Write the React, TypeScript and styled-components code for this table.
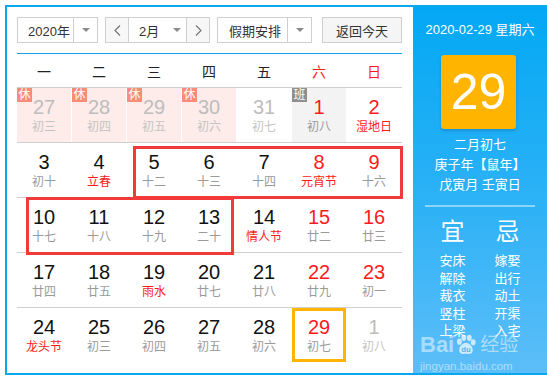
import React from "react";
import styled, { createGlobalStyle, css } from "styled-components";

const GlobalStyle = createGlobalStyle`
  html, body { margin: 0; padding: 0; background: #fff; }
  body { font-family: "Liberation Sans", "Noto Sans CJK SC", sans-serif; }
  * { box-sizing: border-box; }
`;

const BLUE = "#0aa6f0";
const RED = "#ff1a1a";

const Frame = styled.div`
  margin: 5px 0 0 5px;
  width: 542px;
  height: 370px;
  border: 2px solid ${BLUE};
  border-right: none;
  display: flex;
`;

const Main = styled.div`
  width: 406px;
  padding: 10px 11px 0 10px;
  display: flex;
  flex-direction: column;
  background: #fff;
`;

const Toolbar = styled.div`
  display: flex;
  height: 26px;
  align-items: stretch;
`;

const SelectBox = styled.div<{ $ml?: number }>`
  display: flex;
  border: 1px solid #cfcfcf;
  background: #fff;
  margin-left: ${(p) => p.$ml ?? 0}px;
  font-size: 13px;
  color: #333;
`;

const SelectLabel = styled.div<{ $w: number; $pl: number }>`
  width: ${(p) => p.$w}px;
  padding-left: ${(p) => p.$pl}px;
  display: flex;
  align-items: center;
  white-space: nowrap;
`;

const ArrowPart = styled.div<{ $w: number; $divider?: boolean }>`
  width: ${(p) => p.$w}px;
  display: flex;
  align-items: center;
  justify-content: center;
  border-left: ${(p) => (p.$divider ? "1px solid #cfcfcf" : "none")};
`;

const Caret = styled.span`
  width: 0;
  height: 0;
  border-left: 4px solid transparent;
  border-right: 4px solid transparent;
  border-top: 4px solid #8a8a8a;
`;

const NavButton = styled.div<{ $side: "left" | "right" }>`
  width: 23px;
  display: flex;
  align-items: center;
  justify-content: center;
  background: #f7f7f7;
  ${(p) =>
    p.$side === "left"
      ? css`border-right: 1px solid #cfcfcf;`
      : css`border-left: 1px solid #cfcfcf;`}
`;

const MonthMid = styled.div`
  width: 57px;
  display: flex;
  align-items: center;
  padding-left: 10px;
  gap: 14px;
`;

const TodayButton = styled.div`
  margin-left: 10px;
  width: 82px;
  border: 1px solid #cfcfcf;
  background: #f5f5f5;
  display: flex;
  align-items: center;
  justify-content: center;
  font-size: 13px;
  color: #333;
`;

const Rule = styled.div`
  margin-top: 10px;
  height: 1px;
  background: #1ba0e6;
  width: 385px;
`;

const WeekHeader = styled.div`
  display: grid;
  grid-template-columns: repeat(7, 54px);
  column-gap: 1px;
  height: 33px;
  align-items: center;
`;

const WeekLabel = styled.div<{ $weekend?: boolean }>`
  text-align: center;
  font-size: 14px;
  color: ${(p) => (p.$weekend ? RED : "#222")};
`;

const Grid = styled.div`
  position: relative;
`;

const Row = styled.div`
  display: grid;
  grid-template-columns: repeat(7, 54px);
  column-gap: 1px;
  border-top: 1px solid #cfcfcf;
  height: 55px;
`;

type Tone = "other" | "normal" | "weekend";

const Cell = styled.div<{ $bg?: string; $selected?: boolean }>`
  position: relative;
  background: ${(p) => p.$bg ?? "#fff"};
  display: flex;
  flex-direction: column;
  align-items: center;
  padding-top: 8px;
  ${(p) => p.$selected && css`box-shadow: inset 0 0 0 3px #ffb400;`}
`;

const Badge = styled.span<{ $kind: "rest" | "work" }>`
  position: absolute;
  left: 0;
  top: 0;
  width: 15px;
  height: 14px;
  font-size: 12px;
  line-height: 14px;
  text-align: center;
  color: #fff;
  background: ${(p) => (p.$kind === "rest" ? "#f98c79" : "#8e8e8e")};
`;

const DayNum = styled.div<{ $tone: Tone }>`
  font-size: 20px;
  line-height: 22px;
  color: ${(p) => (p.$tone === "other" ? "#bdbdbd" : p.$tone === "weekend" ? RED : "#111")};
`;

const Lunar = styled.div<{ $tone: "other" | "normal" | "festival" }>`
  font-size: 12px;
  line-height: 16px;
  margin-top: 1px;
  color: ${(p) => (p.$tone === "other" ? "#c4c4c4" : p.$tone === "festival" ? RED : "#9a9a9a")};
`;

const Annotation = styled.div<{ $l: number; $t: number; $w: number; $h: number }>`
  position: absolute;
  left: ${(p) => p.$l}px;
  top: ${(p) => p.$t}px;
  width: ${(p) => p.$w}px;
  height: ${(p) => p.$h}px;
  border: 3px solid #f23a3a;
  pointer-events: none;
`;

const Side = styled.div`
  position: relative;
  flex: 1;
  background: linear-gradient(to bottom, #03a8f4 0%, #2eb2f6 55%, #5dbef8 100%);
  display: flex;
  flex-direction: column;
  align-items: center;
  padding: 13px 10px 0;
  color: #fff;
`;

const DateLine = styled.div`
  font-size: 13px;
  line-height: 20px;
  white-space: nowrap;
`;

const DayBox = styled.div`
  margin-top: 15px;
  width: 75px;
  height: 74px;
  border-radius: 3px;
  background: #ffb400;
  box-shadow: 0 2px 3px rgba(0, 60, 120, 0.25);
  display: flex;
  align-items: center;
  justify-content: center;
  font-family: "Liberation Sans", sans-serif;
  font-size: 50px;
  color: #fff;
  margin-right: 3px;
`;

const InfoLines = styled.div`
  margin-top: 6px;
  font-size: 13px;
  line-height: 20px;
  text-align: center;
`;

const SideRule = styled.div`
  margin-top: 10px;
  width: 110px;
  height: 2px;
  background: rgba(255, 255, 255, 0.45);
`;

const AdviceGrid = styled.div`
  margin-top: 10px;
  display: grid;
  grid-template-columns: 55px 55px;
  text-align: center;
`;

const AdviceTitle = styled.div`
  font-size: 24px;
  line-height: 30px;
  margin-bottom: 5px;
`;

const AdviceItem = styled.div`
  font-size: 13px;
  line-height: 17.5px;
`;

const Watermark = styled.div`
  position: absolute;
  left: 7px;
  top: 325px;
  color: rgba(255, 255, 255, 0.5);
  pointer-events: none;
  display: flex;
  flex-direction: column;
`;

const WmTop = styled.div`
  display: flex;
  align-items: center;
  font-size: 22px;
  font-weight: bold;
  line-height: 26px;
`;

const WmCn = styled.span`
  font-size: 19px;
  font-weight: normal;
  margin-left: 2px;
`;

const WmUrl = styled.div`
  font-size: 11.5px;
  line-height: 14px;
  margin-top: 1px;
`;

type Day = {
  d: number;
  l: string;
  tone: Tone;
  fest?: boolean;
  bg?: string;
  badge?: "rest" | "work";
  selected?: boolean;
};

const PINK = "#fdecea";

const rows: Day[][] = [
  [
    { d: 27, l: "初三", tone: "other", bg: PINK, badge: "rest" },
    { d: 28, l: "初四", tone: "other", bg: PINK, badge: "rest" },
    { d: 29, l: "初五", tone: "other", bg: PINK, badge: "rest" },
    { d: 30, l: "初六", tone: "other", bg: PINK, badge: "rest" },
    { d: 31, l: "初七", tone: "other" },
    { d: 1, l: "初八", tone: "weekend", bg: "#f3f3f3", badge: "work" },
    { d: 2, l: "湿地日", tone: "weekend", fest: true },
  ],
  [
    { d: 3, l: "初十", tone: "normal" },
    { d: 4, l: "立春", tone: "normal", fest: true },
    { d: 5, l: "十二", tone: "normal" },
    { d: 6, l: "十三", tone: "normal" },
    { d: 7, l: "十四", tone: "normal" },
    { d: 8, l: "元宵节", tone: "weekend", fest: true },
    { d: 9, l: "十六", tone: "weekend" },
  ],
  [
    { d: 10, l: "十七", tone: "normal" },
    { d: 11, l: "十八", tone: "normal" },
    { d: 12, l: "十九", tone: "normal" },
    { d: 13, l: "二十", tone: "normal" },
    { d: 14, l: "情人节", tone: "normal", fest: true },
    { d: 15, l: "廿二", tone: "weekend" },
    { d: 16, l: "廿三", tone: "weekend" },
  ],
  [
    { d: 17, l: "廿四", tone: "normal" },
    { d: 18, l: "廿五", tone: "normal" },
    { d: 19, l: "雨水", tone: "normal", fest: true },
    { d: 20, l: "廿七", tone: "normal" },
    { d: 21, l: "廿八", tone: "normal" },
    { d: 22, l: "廿九", tone: "weekend" },
    { d: 23, l: "初一", tone: "weekend" },
  ],
  [
    { d: 24, l: "龙头节", tone: "normal", fest: true },
    { d: 25, l: "初三", tone: "normal" },
    { d: 26, l: "初四", tone: "normal" },
    { d: 27, l: "初五", tone: "normal" },
    { d: 28, l: "初六", tone: "normal" },
    { d: 29, l: "初七", tone: "weekend", selected: true },
    { d: 1, l: "初八", tone: "other" },
  ],
];

const weekdays = ["一", "二", "三", "四", "五", "六", "日"];
const yi = ["安床", "解除", "裁衣", "竖柱", "上梁"];
const ji = ["嫁娶", "出行", "动土", "开渠", "入宅"];

const Chevron = ({ dir }: { dir: "left" | "right" }) => (
  <svg width="7" height="11" viewBox="0 0 7 11">
    <polyline
      points={dir === "left" ? "6,0.5 1,5.5 6,10.5" : "1,0.5 6,5.5 1,10.5"}
      fill="none"
      stroke="#777"
      strokeWidth="1.2"
    />
  </svg>
);

const Paw = () => (
  <svg width="22" height="22" viewBox="0 0 20 20" style={{ margin: "0 1px" }}>
    <g fill="rgba(255,255,255,0.7)">
      <ellipse cx="4" cy="7" rx="2.2" ry="2.8" />
      <ellipse cx="8" cy="3.5" rx="2.2" ry="2.8" />
      <ellipse cx="13" cy="3.5" rx="2.2" ry="2.8" />
      <ellipse cx="16.5" cy="7.5" rx="2.2" ry="2.8" />
      <path d="M10 8 C6 8 3 13 4 16 C5 19 8 18 10 18 C12 18 15 19 16 16 C17 13 14 8 10 8Z" />
    </g>
    <text x="10" y="16.5" fontSize="7" textAnchor="middle" fill="#45b8f7" fontFamily="Liberation Sans">du</text>
  </svg>
);

export default function App() {
  return (
    <>
      <GlobalStyle />
      <Frame>
        <Main>
          <Toolbar>
            <SelectBox>
              <SelectLabel $w={55} $pl={10}>2020年</SelectLabel>
              <ArrowPart $w={24} $divider>
                <Caret />
              </ArrowPart>
            </SelectBox>
            <SelectBox $ml={7}>
              <NavButton $side="left">
                <Chevron dir="left" />
              </NavButton>
              <MonthMid>
                <span>2月</span>
                <Caret />
              </MonthMid>
              <NavButton $side="right">
                <Chevron dir="right" />
              </NavButton>
            </SelectBox>
            <SelectBox $ml={7}>
              <SelectLabel $w={69} $pl={11}>假期安排</SelectLabel>
              <ArrowPart $w={24} $divider>
                <Caret />
              </ArrowPart>
            </SelectBox>
            <TodayButton>返回今天</TodayButton>
          </Toolbar>
          <Rule />
          <WeekHeader>
            {weekdays.map((w, i) => (
              <WeekLabel key={w} $weekend={i >= 5}>
                {w}
              </WeekLabel>
            ))}
          </WeekHeader>
          <Grid>
            {rows.map((r, ri) => (
              <Row key={ri}>
                {r.map((c, ci) => (
                  <Cell key={ci} $bg={c.bg} $selected={c.selected}>
                    {c.badge && <Badge $kind={c.badge}>{c.badge === "rest" ? "休" : "班"}</Badge>}
                    <DayNum $tone={c.tone}>{c.d}</DayNum>
                    <Lunar $tone={c.fest ? "festival" : c.tone === "other" ? "other" : "normal"}>{c.l}</Lunar>
                  </Cell>
                ))}
              </Row>
            ))}
            <Annotation $l={116} $t={59} $w={270} $h={53} />
            <Annotation $l={9} $t={110} $w={208} $h={58} />
          </Grid>
        </Main>
        <Side>
          <DateLine>2020-02-29 星期六</DateLine>
          <DayBox>29</DayBox>
          <InfoLines>
            <div>二月初七</div>
            <div>庚子年【鼠年】</div>
            <div>戊寅月 壬寅日</div>
          </InfoLines>
          <SideRule />
          <AdviceGrid>
            <div>
              <AdviceTitle>宜</AdviceTitle>
              {yi.map((t) => (
                <AdviceItem key={t}>{t}</AdviceItem>
              ))}
            </div>
            <div>
              <AdviceTitle>忌</AdviceTitle>
              {ji.map((t) => (
                <AdviceItem key={t}>{t}</AdviceItem>
              ))}
            </div>
          </AdviceGrid>
          <Watermark>
            <WmTop>
              Bai
              <Paw />
              <WmCn>经验</WmCn>
            </WmTop>
            <WmUrl>jingyan.baidu.com</WmUrl>
          </Watermark>
        </Side>
      </Frame>
    </>
  );
}
